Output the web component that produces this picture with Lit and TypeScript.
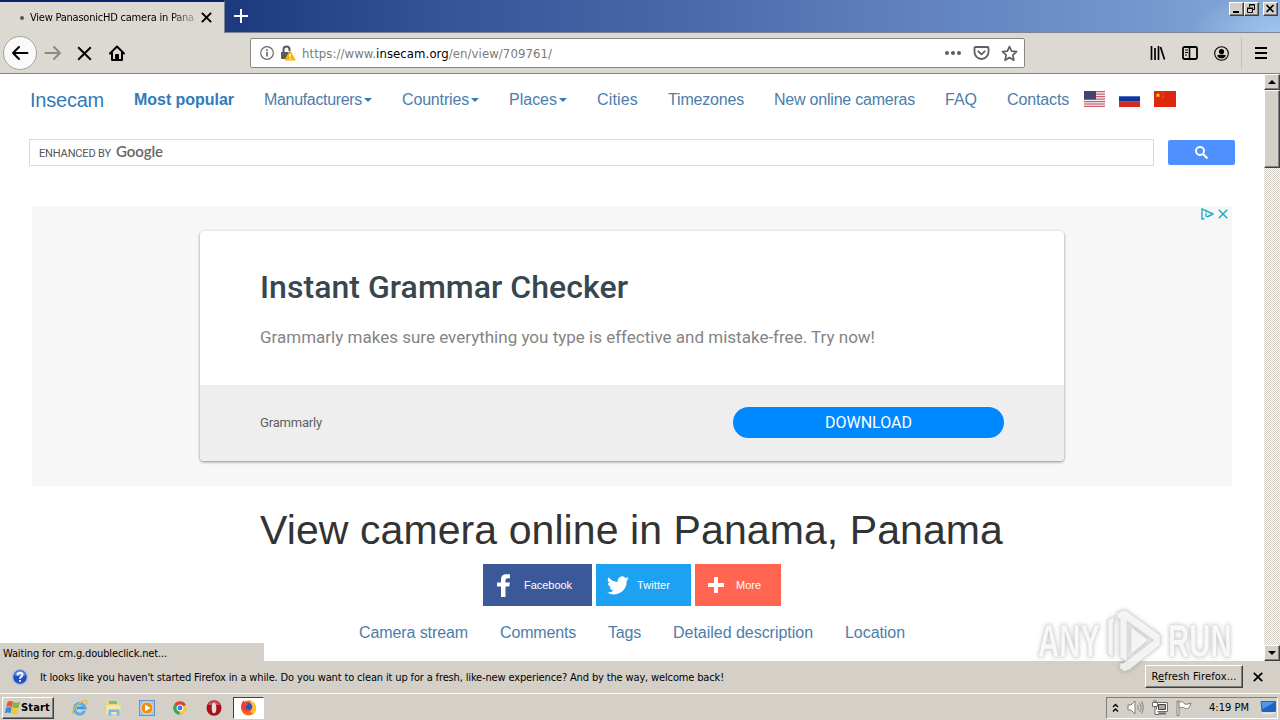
import { LitElement, html, css, svg } from 'lit';
import { customElement, property } from 'lit/decorators.js';

// Single line of text, tracked so that it takes exactly `w` pixels
@customElement('fit-text')
export class FitText extends LitElement {
  @property({ type: Number }) w = 0;

  static styles = css`
    :host {
      display: inline-block;
      white-space: nowrap;
      flex: none;
    }
  `;

  firstUpdated() {
    const natural = this.getBoundingClientRect().width;
    const count = (this.textContent || '').trim().length;
    if (this.w && count) this.style.letterSpacing = `${(this.w - natural) / count}px`;
  }

  render() {
    return html`<slot></slot>`;
  }
}

const NAV = [
  { text: 'Manufacturers', w: 98, caret: true },
  { text: 'Countries', w: 67, caret: true },
  { text: 'Places', w: 48, caret: true },
  { text: 'Cities', w: 41 },
  { text: 'Timezones', w: 76 },
  { text: 'New online cameras', w: 141 },
  { text: 'FAQ', w: 32 },
  { text: 'Contacts', w: 62 }
];

const SECTIONS = [
  { text: 'Camera stream', w: 109 },
  { text: 'Comments', w: 76 },
  { text: 'Tags', w: 33 },
  { text: 'Detailed description', w: 140 },
  { text: 'Location', w: 60 }
];

const cross = (size: number, weight: number) => html`
  <svg width=${size} height=${size} viewBox="0 0 10 10">
    <path d="M.8.8l8.4 8.4M9.2.8L.8 9.2" stroke="currentColor" stroke-width=${weight} fill="none" />
  </svg>`;

const backIcon = html`
  <svg width="18" height="16" viewBox="0 0 18 16" fill="none" stroke="#000" stroke-width="2" stroke-linecap="round" stroke-linejoin="round">
    <path d="M16.500 8H2M8 2L2 8l6 6" />
  </svg>`;

const forwardIcon = html`
  <svg width="18" height="16" viewBox="0 0 18 16" fill="none" stroke="#8c8a86" stroke-width="2" stroke-linecap="round" stroke-linejoin="round">
    <path d="M1.500 8H16M10 2l6 6-6 6" />
  </svg>`;

const homeIcon = html`
  <svg width="18" height="18" viewBox="0 0 18 18" fill="none" stroke="#000" stroke-width="2" stroke-linejoin="round" stroke-linecap="round">
    <path d="M2 9.500L9 2.500l7 7M4 8.500V16h10V8.500" />
    <path d="M8 15.500V11h2v4.500" />
  </svg>`;

const infoIcon = html`
  <svg width="14" height="14" viewBox="0 0 14 14">
    <circle cx="7" cy="7" r="6.300" fill="none" stroke="#6a6a6a" stroke-width="1.200" />
    <path d="M7 6v4.500" stroke="#6a6a6a" stroke-width="1.700" />
    <circle cx="7" cy="3.900" r="1" fill="#6a6a6a" />
  </svg>`;

const lockIcon = html`
  <svg width="16" height="16" viewBox="0 0 16 16">
    <path d="M3.500 8V4.500a3 3 0 0 1 6 0V6" fill="none" stroke="#5b5b5b" stroke-width="2" />
    <rect x="1" y="7" width="9" height="7" rx="1" fill="#5b5b5b" />
    <path d="M10 6L15.200 15H5z" fill="#ffb400" stroke="#ffb400" stroke-linejoin="round" />
    <path d="M10 9v3M10 13.200v1.300" stroke="#fff" stroke-width="1.300" />
  </svg>`;

const dotsIcon = html`
  <svg width="18" height="6" viewBox="0 0 18 6" fill="#5e5e5e">
    <circle cx="3" cy="3" r="2" /><circle cx="9" cy="3" r="2" /><circle cx="15" cy="3" r="2" />
  </svg>`;

const pocketIcon = html`
  <svg width="17" height="16" viewBox="0 0 17 16" fill="none" stroke="#5e5e5e" stroke-width="1.800" stroke-linecap="round" stroke-linejoin="round">
    <path d="M2.500 2h12a1 1 0 0 1 1 1v4a7 7 0 0 1-14 0V3a1 1 0 0 1 1-1z" />
    <path d="M5.300 6.300l3.200 3 3.200-3" />
  </svg>`;

const starIcon = html`
  <svg width="17" height="17" viewBox="0 0 17 17" fill="none" stroke="#5e5e5e" stroke-width="1.700" stroke-linejoin="round">
    <path d="M8.500 1.500l2.100 4.700 5 .5-3.800 3.400 1.100 5.100-4.400-2.700-4.400 2.700 1.100-5.100L1.400 6.700l5-.5z" />
  </svg>`;

const libraryIcon = html`
  <svg width="16" height="14" viewBox="0 0 16 14" stroke="#000" stroke-width="1.700" fill="none">
    <path d="M1.500 0v14M5 2v12M8.500 0v14M10.500 1l4 12.500" />
  </svg>`;

const sidebarIcon = html`
  <svg width="16" height="14" viewBox="0 0 16 14" fill="none" stroke="#000">
    <rect x="1" y="1" width="14" height="12" rx="1.500" stroke-width="1.800" />
    <path d="M7.500 1v12" stroke-width="1.600" />
    <path d="M3 4h3M3 6.500h3M3 9h2" />
  </svg>`;

const accountIcon = html`
  <svg width="15" height="15" viewBox="0 0 15 15">
    <circle cx="7.500" cy="7.500" r="6.800" fill="none" stroke="#000" stroke-width="1.100" />
    <circle cx="7.500" cy="5.600" r="2.600" />
    <path d="M3 9.800c1.200-1.300 2.500-1 4.500-1s3.300-.3 4.500 1a5.300 5.300 0 0 1-9 0z" />
  </svg>`;

const menuIcon = html`
  <svg width="12" height="12" viewBox="0 0 12 12" stroke="#000" stroke-width="2">
    <path d="M0 1h12M0 6h12M0 11h12" />
  </svg>`;

const usFlag = html`
  <svg width="21" height="16" viewBox="0 0 21 16">
    <rect width="21" height="16" fill="#f5eef0" />
    ${[0, 2.5, 5, 7.5, 10, 12.4, 14.8].map(y => svg`<rect y=${y} width="21" height="1.200" fill="#c8606e" />`)}
    <rect width="12" height="8.500" fill="#42446e" />
  </svg>`;

const ruFlag = html`
  <svg width="21" height="16" viewBox="0 0 21 16">
    <rect width="21" height="5.500" fill="#fff" />
    <rect y="5.300" width="21" height="5.400" fill="#0b36a5" />
    <rect y="10.700" width="21" height="5.300" fill="#d52b1e" />
  </svg>`;

const cnFlag = html`
  <svg width="22" height="16" viewBox="0 0 22 16">
    <rect width="22" height="16" fill="#de2910" />
    <path d="M4 1.800l.7 1.700h1.800L5.100 4.600l.5 1.800L4 5.300 2.400 6.400l.5-1.800L1.500 3.500h1.800z" fill="#ffde00" />
    <path d="M7.500 1.500h1M9 3.300h1M9 5.300h1M7.500 6.800h1" stroke="#e87810" />
  </svg>`;

const searchIcon = html`
  <svg width="13" height="13" viewBox="0 0 13 13" fill="none" stroke="#fff">
    <circle cx="5" cy="5" r="4" stroke-width="1.900" />
    <path d="M8 8l4.500 4.500" stroke-width="2.200" />
  </svg>`;

const adChoices = html`
  <svg width="13" height="12" viewBox="0 0 13 12" fill="none" stroke="#19aec3" stroke-width="1.400" stroke-linejoin="round">
    <path d="M3.500 10.500L1 11.200V.8l11 5.200-6 3" />
    <path d="M5 3.500v1M5 5.500V9" />
  </svg>`;

const facebookIcon = html`
  <svg width="14" height="23" viewBox="0 0 14 23">
    <path d="M4 23V12.500H0V8.500h4V5.500C4 2 6 .3 9.500.3c1.800 0 3.500.2 3.500.2v3.800h-2c-2 0-2.500 1-2.500 2.200v2h4.400l-.7 4H8.500V23z" fill="#fff" />
  </svg>`;

const twitterIcon = html`
  <svg width="22" height="19" viewBox="0 0 24 20">
    <path d="M24 2.400a10 10 0 0 1-2.800.8A5 5 0 0 0 23.300.5a10 10 0 0 1-3.100 1.200 4.900 4.900 0 0 0-8.400 4.500A14 14 0 0 1 1.700 1a4.900 4.900 0 0 0 1.500 6.600A5 5 0 0 1 1 7v.1a5 5 0 0 0 3.900 4.800 5 5 0 0 1-2.200.1 4.900 4.900 0 0 0 4.600 3.400A10 10 0 0 1 0 17.500 14 14 0 0 0 21.500 5.600v-.7A10 10 0 0 0 24 2.400z" fill="#fff" />
  </svg>`;

const plusIcon = html`
  <svg width="16" height="16" viewBox="0 0 16 16"><path d="M8 0v16M0 8h16" stroke="#fff" stroke-width="4" /></svg>`;

const helpIcon = html`
  <svg width="16" height="16" viewBox="0 0 16 16">
    <circle cx="8" cy="8" r="7.300" fill="#1f4fc0" stroke="#9fb4dc" stroke-width="1.200" />
    <path d="M2.500 6a5.800 5.800 0 0 1 11 0c-3 1.500-8 1.500-11 0z" fill="#6d95e6" />
    <path d="M5.500 6.200C5.500 3 10.500 3 10.500 6c0 1.800-2.500 1.800-2.500 3.700M8 11v1.700" stroke="#fff" stroke-width="1.800" fill="none" />
  </svg>`;

const windowsIcon = html`
  <svg width="16" height="15" viewBox="0 0 16 15">
    <path d="M2.500 2C4.500.6 6 .8 8 1.800L7 7C5 6 3.500 6 1.300 7z" fill="#e8572a" />
    <path d="M8.500 2c2 1 4.300 1 6.500-.2L13.700 7.500c-2 1-4.200 1-6.400-.2z" fill="#7fba3c" />
    <path d="M1 7.700c2-1 3.800-1 5.800 0l-1.200 5.600C3.800 12.300 2 12.300 0 13.300z" fill="#3a8ade" />
    <path d="M7.200 8c2 1 4.300 1 6.300 0l-1.200 5.600c-2 1.200-4.300 1-6.300 0z" fill="#f6c52c" />
  </svg>`;

const ieIcon = html`
  <svg width="17" height="17" viewBox="0 0 17 17" fill="none">
    <path d="M13.600 11.800A5.300 5.300 0 1 1 13.900 8.800H5.500" stroke="#3a9be0" stroke-width="2.700" />
    <path d="M13.600 11.800A5.300 5.300 0 1 1 13.900 8.800" stroke="#8fd3fa" stroke-width=".8" />
    <path d="M2 15.500C-1 13 8 2.500 14 1.500c3-.3 1.700 2.500 1 4" stroke="#e3b93c" stroke-width="1.200" />
  </svg>`;

const explorerIcon = html`
  <svg width="17" height="16" viewBox="0 0 17 16">
    <path d="M1 2h5l1 1.500h7V14H1z" fill="#f0d784" />
    <path d="M4 1h8v3H4z" fill="#7fc26b" />
    <path d="M1.500 5.500h14V14h-14z" fill="#f7e7a9" />
    <path d="M3.500 15.500V9.500h11v6h-2.700V12H6.200v3.500z" fill="#78b7e6" />
  </svg>`;

const playerIcon = html`
  <svg width="17" height="16" viewBox="0 0 17 16">
    <rect x=".5" y=".5" width="15" height="15" fill="#9cc8ee" stroke="#5b96d0" />
    <circle cx="8" cy="8" r="6" fill="#f28a14" stroke="#fbd9a8" />
    <path d="M6 4.500l5.500 3.500L6 11.500z" fill="#fff" />
  </svg>`;

const chromeIcon = html`
  <svg width="14" height="14" viewBox="0 0 15 15">
    <path d="M7.500 7.500L1.300 3.700A7.200 7.200 0 0 1 14 4.500z" fill="#e0402f" />
    <path d="M7.500 7.500L14 4.400A7.200 7.200 0 0 1 7.200 14.700z" fill="#f9cb33" />
    <path d="M7.500 7.500L7.200 14.700A7.200 7.200 0 0 1 1.300 3.700z" fill="#3aa655" />
    <circle cx="7.500" cy="7.500" r="3.200" fill="#3f7de0" stroke="#fff" stroke-width="1.100" />
  </svg>`;

const operaIcon = html`
  <svg width="16" height="16" viewBox="0 0 16 16">
    <ellipse cx="8" cy="8" rx="7.500" ry="7.700" fill="#a51219" />
    <path d="M2 5a6.500 6.500 0 0 1 12 0z" fill="#cf5055" />
    <ellipse cx="8" cy="8" rx="2.300" ry="5.300" fill="#e6dcd8" />
  </svg>`;

const firefoxIcon = html`
  <svg width="17" height="17" viewBox="0 0 17 17">
    <circle cx="8.500" cy="9" r="7.500" fill="#ff6a1a" />
    <path d="M10 1c3 2 6 4 6 8.500 0 1.500-.5 3-1.500 4.500-2 1-4 0-4-3z" fill="#ffc423" />
    <circle cx="8" cy="7.800" r="4.300" fill="#2b4fc4" />
    <path d="M1 8c.2-3 1-5 2.500-6.500C4 3 6 4.500 8.500 4.500 8 6.500 5 7 5.500 8.500c1 2.500 4 2.500 6 1.500-1 4-9 4-10.500-2z" fill="#f2412b" />
  </svg>`;

const speakerIcon = html`
  <svg width="17" height="15" viewBox="0 0 17 15" fill="none" stroke="#7e7b76">
    <path d="M1 5h3l4-4v13l-4-4H1z" fill="#fff" />
    <path d="M10.500 5c1 1.500 1 3.500 0 5M12.500 3c2 3 2 6 0 9M14.500 1.500c2.300 4 2.300 8 0 12" />
  </svg>`;

const networkIcon = html`
  <svg width="16" height="15" viewBox="0 0 16 15" fill="none" stroke="#6f6d69">
    <path d="M4.500 2.500h11v9h-11z" fill="#fff" />
    <path d="M6.500 4.500h7v5h-7z" fill="#aaa69f" stroke="#45433f" />
    <path d="M6 13.500h8" stroke-width="2" />
    <path d="M.5 2.500h5v4h-5zM3 6.500v8h4M2 0v2M4 0v2" fill="#fff" />
  </svg>`;

const flagIcon = html`
  <svg width="16" height="16" viewBox="0 0 16 16" fill="#fff" stroke="#7e7b76">
    <path d="M1 1h2v14.500H1z" />
    <path d="M3 2c3-1 4 0 5 1.500 2 1.500 4 .5 7-.5-1 3-2 5-3.500 5.500-1.500.7-3-.5-4-1-1.500-.5-3 0-4.500.5z" />
  </svg>`;

const desktopIcon = html`
  <svg width="16" height="14" viewBox="0 0 16 14">
    <path d="M1 .5h14.500v10H2z" fill="#1f62c4" stroke="#3b5f92" />
    <path d="M1.500 1H15L2.500 8z" fill="#4f97ea" />
    <path d="M1 12.500h9l5.500-1" stroke="#dfe8f2" stroke-width="1.500" fill="none" />
  </svg>`;

const watermarkPlay = html`
  <svg width="56" height="64" viewBox="0 0 56 64" fill="#fff" fill-opacity=".8" stroke="#dcdcdc" stroke-width="1" stroke-linejoin="round">
    <path d="M2 11l6-3v5l-1 1v34l-5-3z" />
    <path fill-rule="evenodd" d="M11 4l8-3 35 25v10L24 60l-6 2-4-3v-4l4-1 30-23-27-19v40l-7-4V10l-3-1zM25 18v27l17-14z" />
  </svg>`;

@customElement('app-root')
export class AppRoot extends LitElement {
  static styles = css`
    :host {
      display: flex;
      flex-direction: column;
      width: 1280px;
      height: 720px;
      position: relative;
      overflow: hidden;
      background: #fff;
      color: #000;
      font: 11px/14px 'DejaVu Sans Condensed', 'DejaVu Sans', sans-serif;
    }
    * {
      box-sizing: border-box;
    }
    svg {
      display: block;
      flex: none;
    }

    /* window frame */
    .titlebar {
      height: 33px;
      flex: none;
      display: flex;
      border-bottom: 1px solid #7d8494;
      background:
        radial-gradient(ellipse 90px 40px at 1280px 33px, rgba(166, 206, 244, 0.8), transparent),
        linear-gradient(90deg, #0a246a 0, #1f3b80 240px, #36559a 460px, #4a68a8 680px, #5f80bd 900px, #7296cc 1130px, #86abda 1280px);
    }
    .tab {
      width: 225px;
      height: 33px;
      border-top: 2px solid #0a246a;
      border-right: 1px solid #7d8494;
      background: #dcd9d3;
      display: flex;
      align-items: center;
      padding: 0 12px 0 20px;
    }
    .bullet {
      width: 4px;
      height: 4px;
      border-radius: 2px;
      background: #555;
      margin-right: 6px;
    }
    .tab-title {
      width: 166px;
      margin-right: 6px;
      -webkit-mask-image: linear-gradient(90deg, #000 140px, rgba(0, 0, 0, 0.2) 166px);
    }
    .new-tab {
      margin: 9px 0 0 9px;
    }
    .caption {
      margin: 2px 2px 0 auto;
      display: flex;
    }
    .cap {
      width: 15px;
      height: 14px;
      background: #d4d0c8;
      border: 1px solid;
      border-color: #fff #404040 #404040 #fff;
      box-shadow: inset -1px -1px #808080;
    }
    .cap.close {
      margin-left: 4px;
    }

    .toolbar {
      height: 41px;
      flex: none;
      display: flex;
      align-items: center;
      background: #dcd9d3;
      border-bottom: 1px solid #86837e;
      padding: 0 13px 0 3px;
    }
    .back {
      width: 34px;
      height: 34px;
      border: 1px solid #a6a39e;
      border-radius: 50%;
      background: #fafafa;
      display: flex;
      align-items: center;
      justify-content: center;
    }
    .forward { margin-left: 7px; }
    .stop { margin-left: 15px; }
    .home { margin-left: 16px; }
    .urlbar {
      width: 775px;
      height: 30px;
      margin-left: 124px;
      background: #fff;
      border: 1px solid #8a8782;
      border-radius: 2px;
      display: flex;
      align-items: center;
      padding: 0 6px 0 9px;
    }
    .lock { margin-left: 6px; }
    .url {
      margin: 1px 0 0 6px;
      font-size: 13px;
      color: #7a7a7a;
    }
    .url b {
      font-weight: normal;
      color: #000;
    }
    .dots { margin-left: auto; }
    .pocket { margin: 0 11px; }
    .tools {
      display: flex;
      align-items: center;
      gap: 16px;
      margin-left: auto;
    }
    .divider {
      width: 1px;
      height: 32px;
      background: #c2beb8;
      margin-right: -3px;
      margin-left: -4px;
    }

    /* viewport */
    .view {
      height: 587px;
      flex: none;
      display: flex;
      background: #fff;
    }
    .page {
      flex: 1;
      font-family: 'Liberation Sans', Arial, sans-serif;
    }
    .nav {
      display: flex;
      align-items: center;
      gap: 30px;
      height: 50px;
      padding: 1px 0 0 30px;
      font-size: 16px;
      line-height: 20px;
      color: #4c7dab;
    }
    .brand {
      font-size: 20px;
      color: #337ab7;
    }
    .nav b {
      color: #337ab7;
    }
    .drop {
      display: flex;
      align-items: center;
      gap: 2px;
    }
    .caret {
      border: 4px solid transparent;
      border-top-color: #337ab7;
      border-bottom: 0;
      margin-top: 1px;
    }
    .flags {
      display: flex;
      gap: 14px;
      margin: -1px 0 0 -15px;
    }
    .search {
      display: flex;
      align-items: center;
      padding: 15px 0 0 29px;
      gap: 14px;
    }
    .box {
      width: 1125px;
      height: 27px;
      border: 1px solid #d9d9d9;
      display: flex;
      align-items: center;
      padding-left: 9px;
      gap: 5px;
      font-family: Roboto, sans-serif;
      font-size: 11px;
      color: #555;
    }
    .enhanced {
      margin-top: 2px;
    }
    .google {
      font: 600 15px/18px Lato, sans-serif;
      margin-top: -3px;
      color: #666;
    }
    .go {
      width: 67px;
      height: 25px;
      border-radius: 2px;
      background: #4d90fe;
      display: flex;
      align-items: center;
      justify-content: center;
    }

    .ad {
      position: relative;
      width: 1200px;
      height: 280px;
      margin: 40px 0 0 32px;
      padding: 25px 168px 0;
      background: #f7f7f7;
      font-family: Roboto, sans-serif;
    }
    .ad-marks {
      position: absolute;
      top: 2px;
      right: 4px;
      display: flex;
      align-items: center;
      gap: 4px;
      color: #19aec3;
    }
    .card {
      height: 230px;
      border-radius: 4px;
      overflow: hidden;
      background: #fff;
      box-shadow: 0 1px 3px rgba(0, 0, 0, 0.45);
    }
    .card-top {
      height: 154px;
      padding: 36px 60px 0;
    }
    .card-title {
      font-size: 32px;
      line-height: 40px;
      font-weight: 500;
      color: #37474f;
    }
    .card-text {
      margin-top: 20px;
      font-size: 17px;
      line-height: 20px;
      color: #848484;
    }
    .card-foot {
      height: 76px;
      background: #eee;
      display: flex;
      align-items: center;
      justify-content: space-between;
      padding: 0 60px 2px;
      font-size: 13px;
      color: #616161;
    }
    .vendor {
      margin-top: 1px;
    }
    .download {
      width: 271px;
      height: 31px;
      border-radius: 16px;
      background: #0088ff;
      color: #fff;
      font-size: 16px;
      line-height: 31px;
      text-align: center;
    }

    .heading {
      margin: 20px 0 0 260px;
      font-size: 41px;
      line-height: 48px;
      color: #333;
    }
    .shares {
      display: flex;
      gap: 4px;
      margin: 10px 0 0 483px;
      color: #fff;
      font-size: 11px;
    }
    .share {
      height: 42px;
      display: flex;
      align-items: center;
    }
    .facebook { width: 109px; padding-left: 14px; gap: 13px; background: #3b5998; }
    .twitter { width: 95px; padding-left: 11px; gap: 8px; background: #1da1f2; }
    .more { width: 86px; padding-left: 13px; gap: 12px; background: #ff6550; }
    .sections {
      display: flex;
      gap: 32px;
      margin: 17px 0 0 359px;
      font-size: 16px;
      line-height: 20px;
      color: #4c7dab;
    }

    .scroll {
      width: 16px;
      display: flex;
      flex-direction: column;
      background: repeating-conic-gradient(#fff 0 25%, #d4d0c8 0 50%) 0 0 / 2px 2px;
    }
    .sbtn {
      height: 16px;
      background: #d4d0c8;
      border: 1px solid;
      border-color: #fff #404040 #404040 #fff;
      box-shadow: inset -1px -1px #808080;
      display: flex;
      align-items: center;
      justify-content: center;
    }
    .thumb {
      height: 78px;
    }
    .down { margin-top: auto; }
    .tri {
      border: 4px solid transparent;
    }
    .tri.up { border-bottom-color: #000; border-top: 0; }
    .tri.dn { border-top-color: #000; border-bottom: 0; }

    .status {
      position: absolute;
      left: 0;
      top: 643px;
      width: 264px;
      height: 19px;
      background: #d4d0c8;
      padding: 4px 0 0 3px;
    }
    .watermark {
      position: absolute;
      left: 1038px;
      top: 609px;
      display: flex;
      align-items: center;
      gap: 6px;
      font: 700 46px/50px 'Liberation Sans', sans-serif;
      color: rgba(255, 255, 255, 0.85);
      filter: drop-shadow(0 0 2px rgba(0, 0, 0, 0.3));
    }
    .wm-text {
      display: inline-block;
      width: 62px;
      transform: scaleX(0.64);
      transform-origin: 0 50%;
      -webkit-text-stroke: 0.5px #dcdcdc;
    }

    .notice {
      height: 32px;
      flex: none;
      display: flex;
      align-items: center;
      background: #d4d0c8;
      padding: 0 17px 0 12px;
    }
    .notice-text { margin: 1px 0 0 12px; }
    .refresh {
      width: 98px;
      height: 23px;
      margin: -2px 10px 0 auto;
      background: #d4d0c8;
      border: 1px solid;
      border-color: #fff #404040 #404040 #fff;
      box-shadow: inset -1px -1px #808080;
      display: flex;
      align-items: center;
      justify-content: center;
      padding-top: 1px;
    }

    .taskbar {
      height: 27px;
      flex: none;
      display: flex;
      align-items: center;
      background: #d4d0c8;
      border-top: 1px solid #fff;
      padding: 1px 2px 0;
    }
    .start {
      width: 52px;
      height: 22px;
      border: 1px solid;
      border-color: #fff #404040 #404040 #fff;
      box-shadow: inset -1px -1px #808080;
      display: flex;
      align-items: center;
      padding-left: 2px;
      font-weight: bold;
    }
    .quick {
      display: flex;
      align-items: center;
      gap: 17px;
      margin-left: 17px;
    }
    .quick svg:nth-child(5) {
      margin-left: 2px;
    }
    .active {
      width: 31px;
      height: 22px;
      margin-left: 11px;
      background: #fff;
      border: 1px solid;
      border-color: #404040 #fff #fff #404040;
      display: flex;
      align-items: center;
      justify-content: center;
    }
    .tray {
      width: 172px;
      height: 22px;
      margin-left: auto;
      border: 1px solid;
      border-color: #808080 #fff #fff #808080;
      display: flex;
      align-items: center;
      padding: 0 1px 0 5px;
    }
    .tray svg { margin-right: 8px; }
    .tray .clock { margin-left: 9px; }
    .desktop { margin-left: auto; }
    .tray .desktop svg { margin-right: 0; }
  `;

  renderTitlebar() {
    return html`
      <div class="titlebar">
        <div class="tab">
          <div class="bullet"></div>
          <div class="tab-title"><fit-text w="164">View PanasonicHD camera in Pana</fit-text></div>
          ${cross(11, 1.8)}
        </div>
        <svg class="new-tab" width="14" height="14" viewBox="0 0 14 14"><path d="M7 0v14M0 7h14" stroke="#fff" stroke-width="2" /></svg>
        <div class="caption">
          <svg class="cap" viewBox="0 0 13 12"><path d="M3 9h6" stroke="#000" stroke-width="2" /></svg>
          <svg class="cap" viewBox="0 0 13 12" fill="none" stroke="#000">
            <path d="M4.500 4V1.500h5v5H8M4 2h6M2.500 5.500h5v4h-5zM2 5h6" />
          </svg>
          <svg class="cap close" viewBox="0 0 13 12"><path d="M2.500 2l7 7M9.500 2l-7 7" stroke="#000" stroke-width="1.700" /></svg>
        </div>
      </div>
    `;
  }

  renderToolbar() {
    return html`
      <div class="toolbar">
        <div class="back">${backIcon}</div>
        <div class="forward">${forwardIcon}</div>
        <div class="stop">${cross(15, 1.3)}</div>
        <div class="home">${homeIcon}</div>
        <div class="urlbar">
          ${infoIcon}
          <div class="lock">${lockIcon}</div>
          <fit-text class="url" w="250">https://www.<b>insecam.org</b>/en/view/709761/</fit-text>
          <div class="dots">${dotsIcon}</div>
          <div class="pocket">${pocketIcon}</div>
          ${starIcon}
        </div>
        <div class="tools">
          ${libraryIcon} ${sidebarIcon} ${accountIcon}
          <div class="divider"></div>
          ${menuIcon}
        </div>
      </div>
    `;
  }

  renderPage() {
    return html`
      <div class="page">
        <div class="nav">
          <fit-text class="brand" w="74">Insecam</fit-text>
          <b><fit-text w="100">Most popular</fit-text></b>
          ${NAV.map(item => html`
            <div class="drop">
              <fit-text w=${item.w}>${item.text}</fit-text>
              ${item.caret ? html`<div class="caret"></div>` : ''}
            </div>
          `)}
          <div class="flags">${usFlag} ${ruFlag} ${cnFlag}</div>
        </div>
        <div class="search">
          <div class="box">
            <fit-text class="enhanced" w="72">ENHANCED BY</fit-text>
            <fit-text class="google" w="47">Google</fit-text>
          </div>
          <div class="go">${searchIcon}</div>
        </div>
        <div class="ad">
          <div class="ad-marks">${adChoices} ${cross(10, 1.5)}</div>
          <div class="card">
            <div class="card-top">
              <div class="card-title"><fit-text w="368">Instant Grammar Checker</fit-text></div>
              <div class="card-text"><fit-text w="615">Grammarly makes sure everything you type is effective and mistake-free. Try now!</fit-text></div>
            </div>
            <div class="card-foot">
              <fit-text class="vendor" w="62">Grammarly</fit-text>
              <div class="download"><fit-text w="87">DOWNLOAD</fit-text></div>
            </div>
          </div>
        </div>
        <div class="heading"><fit-text w="743">View camera online in Panama, Panama</fit-text></div>
        <div class="shares">
          <div class="share facebook">${facebookIcon}<fit-text w="48">Facebook</fit-text></div>
          <div class="share twitter">${twitterIcon}<fit-text w="33">Twitter</fit-text></div>
          <div class="share more">${plusIcon}<fit-text w="25">More</fit-text></div>
        </div>
        <div class="sections">
          ${SECTIONS.map(item => html`<fit-text w=${item.w}>${item.text}</fit-text>`)}
        </div>
      </div>
    `;
  }

  render() {
    return html`
      ${this.renderTitlebar()}
      ${this.renderToolbar()}
      <div class="view">
        ${this.renderPage()}
        <div class="scroll">
          <div class="sbtn"><div class="tri up"></div></div>
          <div class="sbtn thumb"></div>
          <div class="sbtn down"><div class="tri dn"></div></div>
        </div>
      </div>
      <div class="notice">
        ${helpIcon}
        <fit-text class="notice-text" w="684">It looks like you haven't started Firefox in a while. Do you want to clean it up for a fresh, like-new experience? And by the way, welcome back!</fit-text>
        <div class="refresh"><fit-text w="85">R<u>e</u>fresh Firefox...</fit-text></div>
        ${cross(10, 1.8)}
      </div>
      <div class="taskbar">
        <div class="start">${windowsIcon}<fit-text w="29">Start</fit-text></div>
        <div class="quick">${ieIcon} ${explorerIcon} ${playerIcon} ${chromeIcon} ${operaIcon}</div>
        <div class="active">${firefoxIcon}</div>
        <div class="tray">
          <svg width="7" height="10" viewBox="0 0 7 10" fill="none" stroke="#000" stroke-width="1.400"><path d="M1 4l2.500-2.500L6 4M1 8.500L3.500 6 6 8.500" /></svg>
          ${speakerIcon} ${networkIcon} ${flagIcon}
          <fit-text class="clock" w="40">4:19 PM</fit-text>
          <div class="desktop">${desktopIcon}</div>
        </div>
      </div>
      <div class="status"><fit-text w="164">Waiting for cm.g.doubleclick.net...</fit-text></div>
      <div class="watermark">
        <span class="wm-text">ANY</span>${watermarkPlay}<span class="wm-text">RUN</span>
      </div>
    `;
  }
}
